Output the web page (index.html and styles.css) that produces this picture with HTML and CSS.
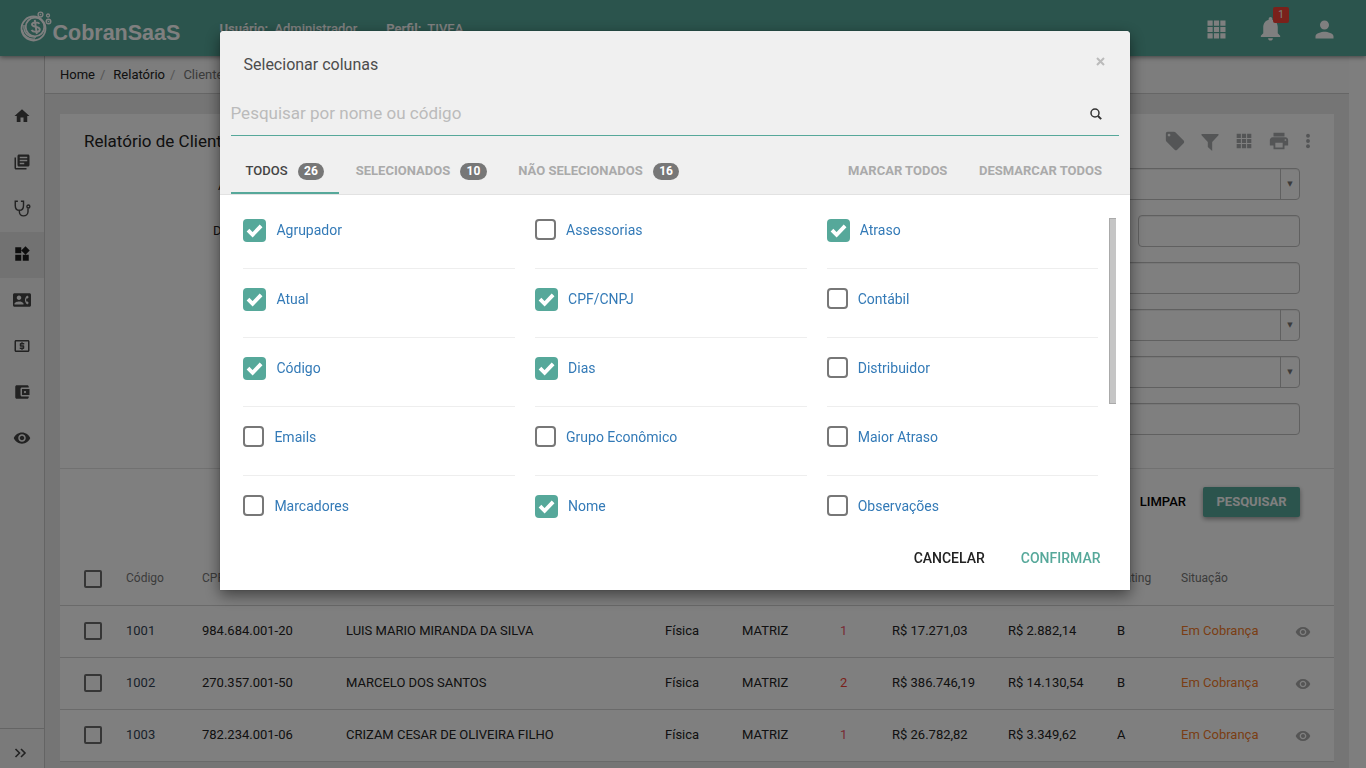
FILE: index.html
```html
<!DOCTYPE html>
<html lang="pt-BR">
<head>
    <meta charset="UTF-8">
    <meta name="viewport" content="width=device-width, initial-scale=1.0">
    <title>Relatório de Clientes | CobranSaaS</title>
    <link rel="stylesheet" href="styles.css">
</head>
<body>
    <!-- Icons -->
    <svg class="sprite">
        <symbol id="i-home" viewBox="0 0 24 24"><path d="M10 20v-6h4v6h5v-8h3L12 3 2 12h3v8z"/></symbol>
        <symbol id="i-library" viewBox="0 0 24 24"><path d="M4 6H2v14c0 1.100.9 2 2 2h14v-2H4V6zm16-4H8c-1.100 0-2 .9-2 2v12c0 1.100.9 2 2 2h12c1.100 0 2-.9 2-2V4c0-1.100-.9-2-2-2zm-1 9H9V9h10v2zm-4 4H9v-2h6v2zm4-8H9V5h10v2z"/></symbol>
        <symbol id="i-steth" viewBox="0 0 24 24"><path d="M6.500 3H3v5.500c0 4 2 6.500 5.500 6.500S14 12.500 14 8.500V3h-3.500M8.500 15v2c0 3 2.200 5.500 5.500 5.500s6-2.500 6-5.500v-4.500" fill="none" stroke="currentColor" stroke-width="1.900"/><circle cx="20.500" cy="10" r="2" fill="none" stroke="currentColor" stroke-width="1.800"/></symbol>
        <symbol id="i-widgets" viewBox="0 0 24 24"><path d="M13 13v8h8v-8h-8zM3 21h8v-8H3v8zM3 3v8h8V3H3zm13.660-1.310L11 7.340 16.660 13l5.660-5.660-5.660-5.650z"/></symbol>
        <symbol id="i-contact" viewBox="0 0 24 24"><path d="M22 3H2C.9 3 0 3.900 0 5v14c0 1.100.9 2 2 2h20c1.100 0 1.990-.9 1.990-2L24 5c0-1.100-.9-2-2-2zM8 6c1.660 0 3 1.340 3 3s-1.340 3-3 3-3-1.340-3-3 1.340-3 3-3zm6 12H2v-1c0-2 4-3.100 6-3.100s6 1.100 6 3.100v1zm3.850-4h1.640L21 16l-1.990 1.990c-1.310-.98-2.280-2.380-2.730-3.990-.18-.64-.28-1.310-.28-2s.1-1.360.28-2c.45-1.620 1.420-3.010 2.730-3.990L21 8l-1.510 2h-1.640c-.22.63-.35 1.300-.35 2s.13 1.370.35 2z"/></symbol>
        <symbol id="i-money" viewBox="0 0 24 24"><path d="M11 17h2v-1h1c.55 0 1-.45 1-1v-3c0-.55-.45-1-1-1h-3v-1h4V8h-2V7h-2v1h-1c-.55 0-1 .45-1 1v3c0 .55.45 1 1 1h3v1H9v2h2v1zm9-13H4c-1.110 0-1.990.89-1.990 2L2 18c0 1.110.89 2 2 2h16c1.110 0 2-.89 2-2V6c0-1.110-.89-2-2-2zm0 14H4V6h16v12z"/></symbol>
        <symbol id="i-wallet" viewBox="0 0 24 24"><path d="M21 18v1c0 1.100-.9 2-2 2H5c-1.110 0-2-.9-2-2V5c0-1.100.89-2 2-2h14c1.100 0 2 .9 2 2v1h-9c-1.110 0-2 .9-2 2v8c0 1.100.89 2 2 2h9zm-9-2h10V8H12v8zm4-2.500c-.83 0-1.500-.67-1.500-1.500s.67-1.500 1.500-1.500 1.500.67 1.500 1.500-.67 1.500-1.500 1.500z"/></symbol>
        <symbol id="i-eye" viewBox="0 0 24 24"><path d="M12 4.500C7 4.500 2.730 7.610 1 12c1.730 4.390 6 7.500 11 7.500s9.270-3.110 11-7.500c-1.730-4.390-6-7.500-11-7.500zM12 17c-2.760 0-5-2.240-5-5s2.240-5 5-5 5 2.240 5 5-2.240 5-5 5zm0-8c-1.660 0-3 1.340-3 3s1.340 3 3 3 3-1.340 3-3-1.340-3-3-3z"/></symbol>
        <symbol id="i-apps" viewBox="0 0 24 24"><path d="M4 4h4.600v4.600H4zM9.700 4h4.600v4.600H9.700zM15.400 4H20v4.600h-4.600zM4 9.700h4.600v4.600H4zM9.700 9.700h4.600v4.600H9.700zM15.400 9.700H20v4.600h-4.600zM4 15.400h4.600V20H4zM9.700 15.400h4.600V20H9.700zM15.400 15.400H20V20h-4.600z"/></symbol>
        <symbol id="i-bell" viewBox="0 0 24 24"><path d="M12 22c1.100 0 2-.9 2-2h-4c0 1.100.89 2 2 2zm6-6v-5c0-3.070-1.640-5.640-4.500-6.320V4c0-.83-.67-1.500-1.500-1.500s-1.500.67-1.500 1.500v.68C7.630 5.360 6 7.920 6 11v5l-2 2v1h16v-1l-2-2z"/></symbol>
        <symbol id="i-person" viewBox="0 0 24 24"><path d="M12 12c2.210 0 4-1.790 4-4s-1.790-4-4-4-4 1.790-4 4 1.790 4 4 4zm0 2c-2.670 0-8 1.340-8 4v2h16v-2c0-2.660-5.330-4-8-4z"/></symbol>
        <symbol id="i-tag" viewBox="0 0 24 24"><path d="M21.410 11.580l-9-9C12.050 2.220 11.550 2 11 2H4c-1.100 0-2 .9-2 2v7c0 .55.22 1.050.59 1.420l9 9c.36.36.86.58 1.410.58.55 0 1.050-.22 1.410-.59l7-7c.37-.36.59-.86.59-1.410 0-.55-.23-1.060-.59-1.420zM5.500 7C4.670 7 4 6.330 4 5.500S4.670 4 5.500 4 7 4.670 7 5.500 6.330 7 5.500 7z"/></symbol>
        <symbol id="i-filter" viewBox="0 0 18 18"><path d="M.5 1h17v1.200L11.200 9v9L6.800 14V9L.5 2.200z"/></symbol>
        <symbol id="i-print" viewBox="0 0 24 24"><path d="M19 8H5c-1.660 0-3 1.340-3 3v6h4v4h12v-4h4v-6c0-1.660-1.340-3-3-3zm-3 11H8v-5h8v5zm3-7c-.55 0-1-.45-1-1s.45-1 1-1 1 .45 1 1-.45 1-1 1zm-1-9H6v4h12V3z"/></symbol>
        <symbol id="i-more" viewBox="0 0 24 24"><circle cx="12" cy="5" r="2.600"/><circle cx="12" cy="12" r="2.600"/><circle cx="12" cy="19" r="2.600"/></symbol>
        <symbol id="i-search" viewBox="0 0 12 12"><circle cx="5" cy="5" r="4" fill="none" stroke="currentColor" stroke-width="1.500"/><path d="M8 8l3.200 3.200" stroke="currentColor" stroke-width="1.900"/></symbol>
        <symbol id="i-check" viewBox="0 0 23 23"><path d="M5 11.200l4.600 4.600 8.500-8.900" fill="none" stroke="currentColor" stroke-width="3.800"/></symbol>
    </svg>

    <header class="topbar">
        <div class="logo">
            <svg class="logo-coin" viewBox="0 0 34 34" fill="none" stroke="currentColor">
                <circle cx="13.500" cy="17.500" r="12" stroke-width="1.800"/>
                <circle cx="15" cy="16" r="9.300" stroke-width="1.800"/>
                <path d="M2 19c1.500 6 7 10 13 9M4 14c-1 8 5 13 12 12" stroke-width="1.400"/>
                <path d="M19.500 12.800c-1.500-2-7.500-2-7.500.8 0 3 7.800 1.600 7.800 4.800 0 3.300-6.800 3.100-8.300.6M14.800 8.800l2 14.200" stroke-width="1.900"/>
                <circle cx="20.500" cy="3.500" r="2.400" stroke-width="1.400"/>
                <circle cx="28" cy="4.500" r="1.500" stroke-width="1.300"/>
                <circle cx="28.500" cy="10.500" r="2.300" stroke-width="1.400"/>
                <path d="M19.800 3l1.400 1M27.800 10l1.400 1" stroke-width="1.200"/>
            </svg>
            <span class="logo-text">CobranSaaS</span>
        </div>
        <div class="user-info">
            <span><b>Usuário:</b> Administrador</span>
            <span><b>Perfil:</b> TIVEA</span>
        </div>
        <div class="top-icons">
            <svg class="icon"><use href="#i-apps"/></svg>
            <span class="bell">
                <svg class="icon"><use href="#i-bell"/></svg>
                <span class="bell-count">1</span>
            </span>
            <svg class="icon"><use href="#i-person"/></svg>
        </div>
    </header>

    <div class="layout">
        <nav class="sidebar">
            <ul>
                <li><svg><use href="#i-home"/></svg></li>
                <li><svg><use href="#i-library"/></svg></li>
                <li><svg><use href="#i-steth"/></svg></li>
                <li class="active"><svg><use href="#i-widgets"/></svg></li>
                <li><svg><use href="#i-contact"/></svg></li>
                <li><svg><use href="#i-money"/></svg></li>
                <li><svg><use href="#i-wallet"/></svg></li>
                <li><svg><use href="#i-eye"/></svg></li>
            </ul>
            <div class="sidebar-toggle">
                <svg viewBox="0 0 12 10" fill="none" stroke="currentColor" stroke-width="1.600"><path d="M1 1l4 4-4 4M6.500 1l4 4-4 4"/></svg>
            </div>
        </nav>

        <main>
            <div class="breadcrumb">
                <a>Home</a><i>/</i><a>Relatório</a><i>/</i><span>Clientes</span>
            </div>

            <section class="card">
                <div class="card-head">
                    <h1>Relatório de Clientes</h1>
                    <div class="card-tools">
                        <svg class="t-tag"><use href="#i-tag"/></svg>
                        <svg class="t-filter"><use href="#i-filter"/></svg>
                        <svg class="t-apps"><use href="#i-apps"/></svg>
                        <svg class="t-print"><use href="#i-print"/></svg>
                        <svg class="t-more"><use href="#i-more"/></svg>
                    </div>
                </div>

                <form class="filters">
                    <div class="field"><label class="short">Atraso</label><div class="input select"></div></div>
                    <div class="field"><label>Data</label><div class="input"></div><div class="input half"></div></div>
                    <div class="field"><label></label><div class="input"></div></div>
                    <div class="field"><label></label><div class="input select"></div></div>
                    <div class="field"><label></label><div class="input select"></div></div>
                    <div class="field"><label></label><div class="input"></div></div>
                </form>

                <div class="actions">
                    <span class="btn-clear">LIMPAR</span>
                    <span class="btn-search">PESQUISAR</span>
                </div>

                <div class="table">
                    <div class="row row-head">
                        <span class="box"></span><span>Código</span><span>CPF/CNPJ</span><span>Nome</span><span></span><span></span><span></span><span></span><span></span><span>Rating</span><span>Situação</span><span></span>
                    </div>
                    <div class="row">
                        <span class="box"></span><span class="code">1001</span><span>984.684.001-20</span><span>LUIS MARIO MIRANDA DA SILVA</span><span>Física</span><span>MATRIZ</span><span class="late soft">1</span><span>R$ 17.271,03</span><span>R$ 2.882,14</span><span>B</span><span class="status">Em Cobrança</span><svg><use href="#i-eye"/></svg>
                    </div>
                    <div class="row">
                        <span class="box"></span><span class="code">1002</span><span>270.357.001-50</span><span>MARCELO DOS SANTOS</span><span>Física</span><span>MATRIZ</span><span class="late">2</span><span>R$ 386.746,19</span><span>R$ 14.130,54</span><span>B</span><span class="status">Em Cobrança</span><svg><use href="#i-eye"/></svg>
                    </div>
                    <div class="row">
                        <span class="box"></span><span class="code">1003</span><span>782.234.001-06</span><span>CRIZAM CESAR DE OLIVEIRA FILHO</span><span>Física</span><span>MATRIZ</span><span class="late soft">1</span><span>R$ 26.782,82</span><span>R$ 3.349,62</span><span>A</span><span class="status">Em Cobrança</span><svg><use href="#i-eye"/></svg>
                    </div>
                </div>
            </section>
        </main>
        <div class="scroll-track"></div>
    </div>

    <!-- Column picker -->
    <div class="backdrop">
        <div class="modal">
            <div class="modal-head">
                <div class="modal-title">
                    <h2>Selecionar colunas</h2>
                    <svg class="close" viewBox="0 0 9 9"><path d="M1 1l7 7M8 1L1 8"/></svg>
                </div>
                <div class="search">
                    <span>Pesquisar por nome ou código</span>
                    <svg><use href="#i-search"/></svg>
                </div>
                <div class="tabs">
                    <a class="tab active">TODOS <span class="count">26</span></a>
                    <a class="tab">SELECIONADOS <span class="count">10</span></a>
                    <a class="tab">NÃO SELECIONADOS <span class="count">16</span></a>
                    <a class="tab push">MARCAR TODOS</a>
                    <a class="tab">DESMARCAR TODOS</a>
                </div>
            </div>

            <div class="modal-body">
                <div class="columns">
                    <a class="col on"><svg><use href="#i-check"/></svg>Agrupador</a>
                    <a class="col"><svg></svg>Assessorias</a>
                    <a class="col on"><svg><use href="#i-check"/></svg>Atraso</a>
                    <a class="col on"><svg><use href="#i-check"/></svg>Atual</a>
                    <a class="col on"><svg><use href="#i-check"/></svg>CPF/CNPJ</a>
                    <a class="col"><svg></svg>Contábil</a>
                    <a class="col on"><svg><use href="#i-check"/></svg>Código</a>
                    <a class="col on"><svg><use href="#i-check"/></svg>Dias</a>
                    <a class="col"><svg></svg>Distribuidor</a>
                    <a class="col"><svg></svg>Emails</a>
                    <a class="col"><svg></svg>Grupo Econômico</a>
                    <a class="col"><svg></svg>Maior Atraso</a>
                    <a class="col"><svg></svg>Marcadores</a>
                    <a class="col on"><svg><use href="#i-check"/></svg>Nome</a>
                    <a class="col"><svg></svg>Observações</a>
                </div>
                <div class="thumb"></div>
            </div>

            <div class="modal-foot">
                <span>CANCELAR</span>
                <span class="confirm">CONFIRMAR</span>
            </div>
        </div>
    </div>
</body>
</html>
```

FILE: styles.css
```css
:root {
    --primary: #56a89a;
    --line: #d4d4d4;
    --link: #337ab7;
}

* {
    margin: 0;
    padding: 0;
    box-sizing: border-box;
}

body {
    height: 768px;
    overflow: hidden;
    display: flex;
    flex-direction: column;
    font-family: Roboto, "Liberation Sans", sans-serif;
    font-size: 13px;
    color: #222;
    background: #fff;
}

svg {
    fill: currentColor;
    flex: none;
}

.sprite {
    display: none;
}

/* Top bar */
.topbar {
    height: 56px;
    flex: none;
    display: flex;
    align-items: flex-start;
    background: var(--primary);
    color: #fff;
    box-shadow: 0 1px 5px rgba(0, 0, 0, 0.5);
    z-index: 1;
}

.logo {
    width: 219.5px;
    display: flex;
    padding: 11px 0 0 19.5px;
}

.logo-coin {
    width: 34px;
    height: 34px;
    fill: none;
}

.logo-text {
    font: bold 21.5px/26px "Liberation Sans", Arial, sans-serif;
    padding-top: 9px;
    margin-left: -1px;
}

.user-info {
    display: flex;
    gap: 29px;
    padding-top: 20px;
    line-height: 18px;
    font-weight: 500;
}

.user-info b {
    margin-right: 3px;
}

.top-icons {
    margin-left: auto;
    display: flex;
    align-items: center;
    gap: 27px;
    height: 58px;
    padding-right: 28px;
}

.top-icons .icon {
    width: 27px;
    height: 27px;
    display: block;
}

.bell {
    position: relative;
}

.bell .icon {
    width: 29px;
    height: 29px;
    margin: -1px -1px 0;
}

.bell-count {
    position: absolute;
    left: 16px;
    top: -8px;
    width: 16px;
    height: 16px;
    border-radius: 2px;
    background: #f44336;
    font-size: 10px;
    line-height: 16px;
    text-align: center;
}

/* Sidebar */
.layout {
    flex: 1;
    min-height: 0;
    display: flex;
}

.sidebar {
    width: 45px;
    display: flex;
    flex-direction: column;
    justify-content: space-between;
    background: #f5f5f5;
    border-right: 1px solid #c8c8c8;
    color: #444;
}

.sidebar ul {
    list-style: none;
    padding-top: 38px;
}

.sidebar li {
    height: 46px;
    display: flex;
    align-items: center;
    justify-content: center;
    padding-bottom: 2px;
}

.sidebar li svg {
    width: 18px;
    height: 18px;
}

.sidebar li.active {
    background: #e4e4e4;
    color: #1c1c1c;
}

.sidebar-toggle {
    height: 40px;
    border-top: 1px solid #c8c8c8;
    padding: 19px 0 0 14px;
}

.sidebar-toggle svg {
    width: 13px;
    height: 10px;
    fill: none;
    display: block;
}

/* Content */
main {
    flex: 1;
    background: #ebebeb;
    overflow: hidden;
}

.scroll-track {
    width: 17px;
    background: #fdfdfd;
}

.breadcrumb {
    height: 38px;
    background: #fafafa;
    border-bottom: 1px solid #ccc;
    padding-left: 15px;
    line-height: 37px;
}

.breadcrumb i {
    font-style: normal;
    color: #aaa;
    padding: 0 8px 0 5px;
}

.breadcrumb span {
    color: #777;
}

.card {
    margin: 20px 15px 0;
    background: #fff;
}

.card-head {
    height: 54px;
    display: flex;
    justify-content: space-between;
    align-items: center;
    padding: 0 17px 0 24px;
}

.card-head h1 {
    font-size: 17px;
    font-weight: 400;
}

.card-tools {
    display: flex;
    align-items: center;
    color: #a8abad;
}

.t-tag {
    width: 22px;
    height: 22px;
}

.t-filter {
    width: 18px;
    height: 18px;
    margin: 2px 14px 0 15px;
}

.t-apps {
    width: 22px;
    height: 22px;
}

.t-print {
    width: 22px;
    height: 22px;
    margin: 0 9px 0 13px;
}

.t-more {
    width: 18px;
    height: 18px;
}

.filters {
    height: 300px;
    padding-right: 34px;
    display: flex;
    flex-direction: column;
    gap: 15px;
}

.field {
    display: flex;
    gap: 10px;
    height: 32px;
    flex: none;
}

.field label {
    width: 200px;
    padding-left: 153px;
    line-height: 32px;
}

.field label.short {
    padding-left: 158px;
    line-height: 36px;
}

.input {
    flex: 1;
    border: 1px solid #c0c0c0;
    border-radius: 4px;
    box-shadow: inset 0 1px 1px rgba(0, 0, 0, 0.075);
}

.input.half {
    flex: none;
    width: 162px;
}

.select {
    display: flex;
    justify-content: flex-end;
}

.select::after {
    content: "▼";
    width: 18px;
    border-left: 1px solid #c0c0c0;
    font: 7px/31px "DejaVu Sans", sans-serif;
    text-align: center;
    color: #777;
}

.actions {
    height: 82px;
    border-top: 1px solid #e2e2e2;
    padding: 18px 34px 0 0;
    display: flex;
    justify-content: flex-end;
    gap: 17px;
    line-height: 29px;
}

.btn-clear {
    color: #000;
    font-weight: 500;
}

.btn-search {
    width: 97px;
    height: 30px;
    border-radius: 2px;
    background: var(--primary);
    color: #fff;
    font-weight: 700;
    text-align: center;
    box-shadow: 0 2px 5px rgba(0, 0, 0, 0.4);
}

/* Results */
.row {
    height: 52px;
    display: grid;
    grid-template-columns: 42px 76px 144px 319px 77px 98px 52px 116px 109px 64px 114px 1fr;
    align-items: center;
    padding: 0 0 2px 24px;
    border-bottom: 1px solid var(--line);
    white-space: nowrap;
}

.row-head {
    height: 56px;
    padding: 0 0 0 24px;
    color: #777;
    font-size: 12px;
}

.row .box {
    width: 18px;
    height: 18px;
    margin-top: 1px;
    border: 2px solid #6c6c6c;
    border-radius: 2px;
}

.row-head .box {
    margin-top: 2px;
}

.row svg {
    width: 16px;
    height: 16px;
    margin-top: 3px;
    color: #aaa;
}

.code {
    color: #345;
}

.late {
    color: #f44336;
}

.late.soft {
    color: #f0566a;
}

.status {
    color: #f57c2a;
}

/* Modal */
.backdrop {
    position: fixed;
    inset: 0;
    z-index: 10;
    background: rgba(0, 0, 0, 0.5);
    padding-top: 31px;
}

.modal {
    width: 910px;
    height: 559px;
    margin-left: 220px;
    background: #fff;
    border-radius: 4px 4px 0 0;
    box-shadow: 0 0 1px rgba(0, 0, 0, 0.6), 0 5px 15px rgba(0, 0, 0, 0.5);
}

.modal-head {
    height: 164px;
    padding: 0 11px;
    background: #f0f0f0;
    border-bottom: 1px solid #e2e2e2;
    border-radius: 4px 4px 0 0;
}

.modal-title {
    height: 61px;
    display: flex;
    justify-content: space-between;
    padding: 0 14px 0 12.500px;
}

.modal-title h2 {
    font-size: 16px;
    font-weight: 400;
    line-height: 68px;
    color: #4c4c4c;
}

.close {
    width: 9px;
    height: 9px;
    margin-top: 26px;
    stroke: #bbb;
    stroke-width: 2;
}

.search {
    height: 44px;
    display: flex;
    justify-content: space-between;
    padding-right: 17px;
    border-bottom: 1px solid var(--primary);
    color: #bbb;
    font-size: 17px;
    line-height: 42px;
}

.search span {
    margin-left: -0.5px;
}

.search svg {
    width: 12px;
    height: 12px;
    margin-top: 16px;
    color: #333;
}

.tabs {
    display: flex;
    gap: 2px;
    padding-right: 2px;
}

.tab {
    height: 58px;
    padding: 12px 15px 0 14.600px;
    display: flex;
    align-items: center;
    gap: 10px;
    border-bottom: 2px solid transparent;
    color: #aaa;
    font-weight: 700;
}

.tab.active {
    color: #444;
    font-weight: 500;
    border-bottom-color: var(--primary);
}

.tab.push {
    margin-left: auto;
}

.count {
    height: 17px;
    padding: 0 6.4px;
    border-radius: 9px;
    background: #777;
    color: #fff;
    font-size: 12px;
    font-weight: 700;
    line-height: 17px;
    margin-top: 2px;
}

.modal-body {
    height: 332px;
    padding: 5px 14px 0 23.4px;
    display: flex;
    justify-content: space-between;
    overflow: hidden;
}

.columns {
    width: 855px;
    display: grid;
    grid-template-columns: repeat(3, 1fr);
    grid-auto-rows: 69px;
    column-gap: 20px;
}

.col {
    display: flex;
    align-items: flex-start;
    gap: 10px;
    padding-top: 20px;
    border-bottom: 1px solid #eee;
    color: var(--link);
    font-size: 14px;
    line-height: 20px;
}

.col svg {
    width: 21px;
    height: 21px;
    margin-top: -1px;
    border: 2px solid #777;
    border-radius: 4px;
}

.col.on svg {
    width: 23px;
    height: 23px;
    border: 0;
    background: var(--primary);
    color: #fff;
}

.thumb {
    width: 7px;
    height: 186px;
    margin-top: 18px;
    background: #c5c5c5;
    border: solid #aaa;
    border-width: 1px 0 1px 1px;
}

.modal-foot {
    height: 63px;
    display: flex;
    justify-content: flex-end;
    gap: 36px;
    padding-right: 29.5px;
    line-height: 63px;
    font-size: 14px;
    font-weight: 500;
}

.confirm {
    color: var(--primary);
}
```
